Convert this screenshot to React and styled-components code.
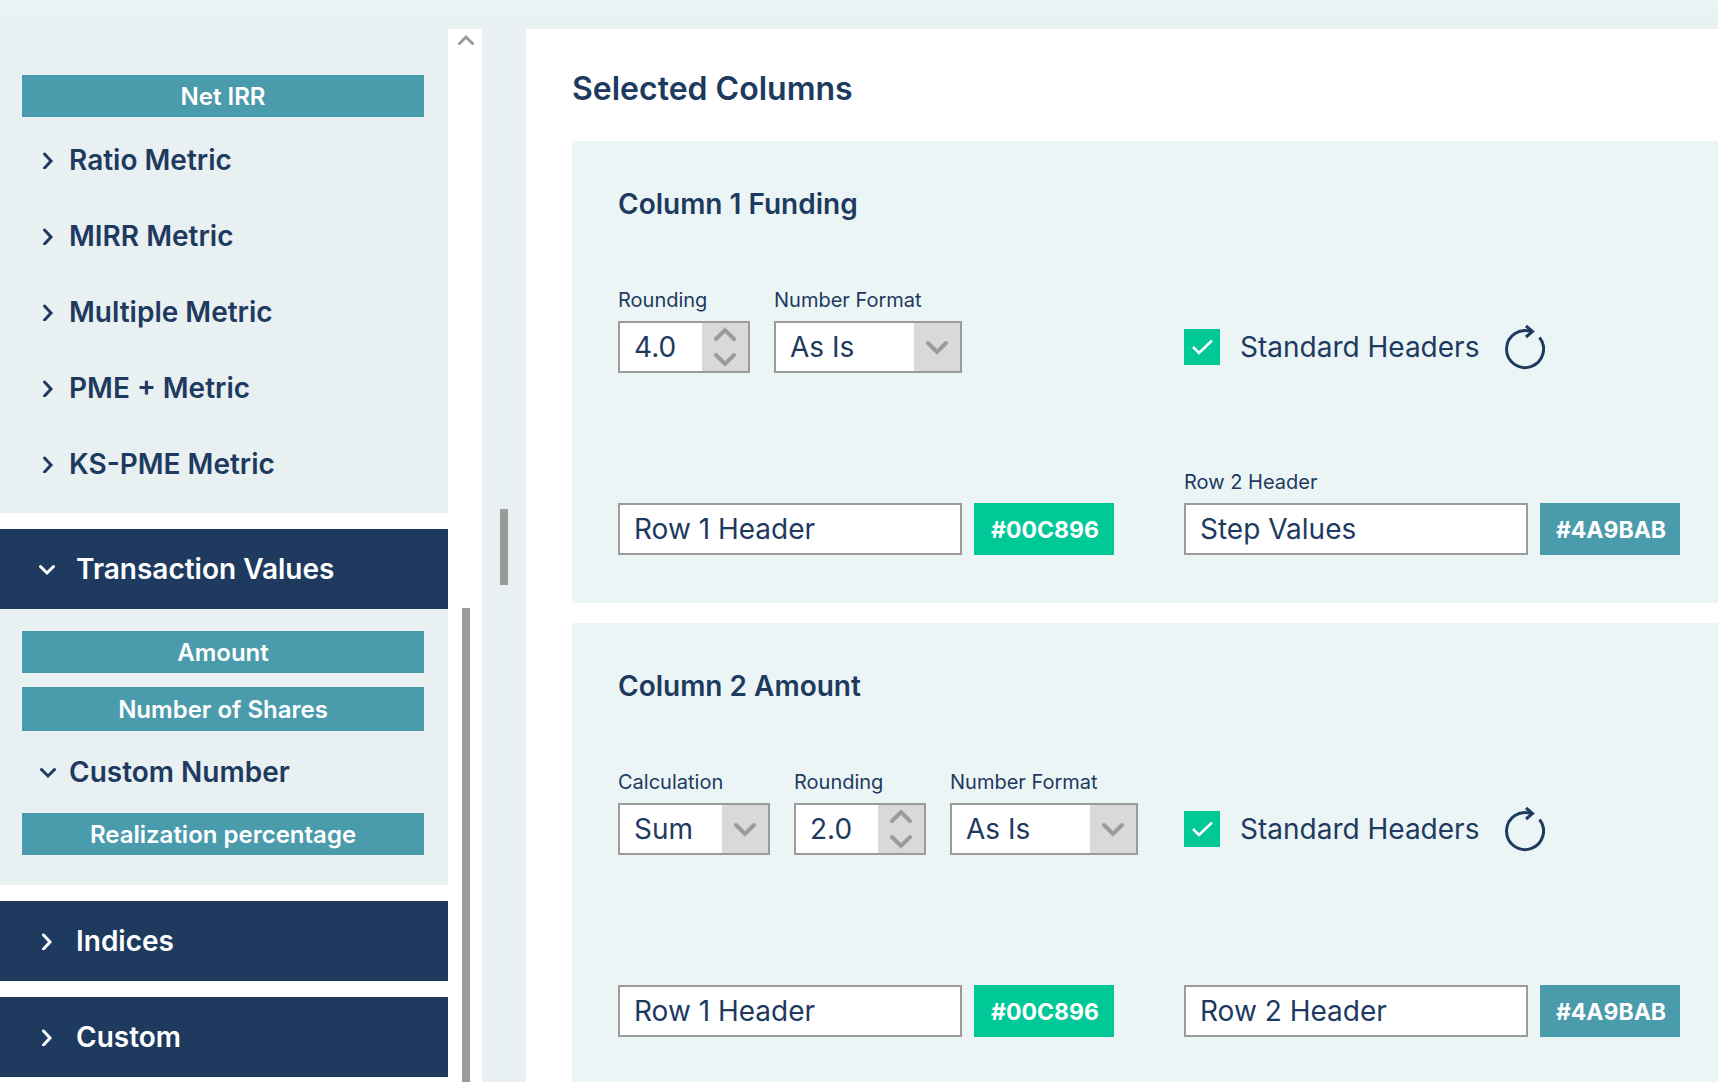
import React, { useState } from "react";
import styled, { createGlobalStyle } from "styled-components";

const GlobalStyle = createGlobalStyle`
  * {
    box-sizing: border-box;
  }
  body {
    margin: 0;
    font-family: Inter, "Liberation Sans", sans-serif;
    color: #1e3a5f;
  }
  button,
  input,
  select {
    margin: 0;
    border: 0;
    border-radius: 0;
    padding: 0;
    font-family: inherit;
    color: inherit;
  }
  button {
    cursor: pointer;
  }
`;

const Page = styled.div`
  display: flex;
  height: 100vh;
  padding-top: 29px;
  overflow: hidden;
  background: linear-gradient(#ebf3f5, #e8f0f2 29px);
`;

const Sidebar = styled.aside`
  flex: none;
  display: flex;
  width: 482px;
  background-color: #ffffff;
`;

const Sections = styled.nav`
  flex: 1;
  display: flex;
  flex-direction: column;
  gap: 16px;
  overflow: hidden;
`;

const Section = styled.section`
  flex: none;
`;

const SectionHeader = styled.button`
  display: flex;
  align-items: center;
  gap: 21px;
  width: 100%;
  height: 80px;
  padding-left: 39px;
  background-color: #1e3a5f;
  color: #ffffff;
  font-size: 28px;
  font-weight: 600;
`;

const SectionBody = styled.div`
  display: flex;
  flex-direction: column;
  gap: ${(props) => props.$gap}px;
  padding: ${(props) => props.$padding};
  background-color: #e8f0f2;
`;

const Metric = styled.button`
  height: ${(props) => (props.$tall ? 44 : 42)}px;
  background-color: #4a9bab;
  color: #ffffff;
  font-size: 24px;
  font-weight: 600;
`;

const GroupList = styled.div`
  display: flex;
  flex-direction: column;
`;

const Group = styled.button`
  display: flex;
  align-items: center;
  gap: 13px;
  height: ${(props) => (props.$open ? 54 : 76)}px;
  padding-left: 18px;
  background: none;
  font-size: 28px;
  font-weight: 600;
`;

const Scrollbar = styled.div`
  flex: none;
  display: flex;
  flex-direction: column;
  align-items: center;
  justify-content: space-between;
  width: 34px;
  padding-left: 2px;
`;

const ScrollUp = styled.button`
  display: flex;
  align-items: center;
  justify-content: center;
  width: 100%;
  height: 22px;
  background: none;
  color: #9b9b99;
`;

const ScrollThumb = styled.div`
  width: 8px;
  height: 45%;
  background-color: #9b9b99;
`;

const Splitter = styled.div`
  flex: none;
  display: flex;
  justify-content: center;
  align-items: center;
  width: 44px;
  padding-bottom: 18px;
  &::before {
    width: 8px;
    height: 76px;
    background-color: #9b9b99;
    content: "";
  }
`;

const Main = styled.main`
  flex: 1;
  min-width: 0;
  padding: 40px 0 0 46px;
  overflow: hidden;
  background-color: #ffffff;
`;

const Title = styled.h1`
  margin: 0 0 32px;
  font-size: 32px;
  line-height: 40px;
  font-weight: 600;
`;

const Card = styled.section`
  margin-bottom: 20px;
  padding: 47px 38px 48px 46px;
  background-color: #ecf5f6;
`;

const CardTitle = styled.h2`
  margin: 0 0 68px;
  font-size: 28px;
  line-height: 32px;
  font-weight: 600;
`;

const CardGrid = styled.div`
  display: grid;
  grid-template-columns: 520px auto;
  align-items: end;
  gap: 97px 46px;
`;

const Fields = styled.div`
  display: flex;
  align-items: flex-end;
  gap: ${(props) => props.$gap}px;
`;

const Field = styled.div`
  display: flex;
  flex-direction: column;
  gap: 9px;
`;

const Label = styled.label`
  height: 24px;
  font-size: 20px;
  line-height: 24px;
  white-space: nowrap;
`;

const Control = styled.div`
  position: relative;
  display: flex;
  width: ${(props) => props.$width}px;
  height: 52px;
  border: 2px solid #9b9b99;
  background-color: #ffffff;
`;

const TextInput = styled.input`
  flex: 1;
  min-width: 0;
  padding-left: 14px;
  background: none;
  font-size: 28px;
  &::placeholder {
    color: inherit;
    opacity: 1;
  }
`;

const Select = styled.select`
  flex: 1;
  padding-left: 14px;
  appearance: none;
  background: linear-gradient(#d9d9d9, #d9d9d9) right / 46px 100% no-repeat;
  font-size: 28px;
`;

const SelectArrow = styled.span`
  position: absolute;
  top: 0;
  right: 0;
  bottom: 0;
  display: flex;
  align-items: center;
  justify-content: center;
  width: 46px;
  color: #9b9b99;
  pointer-events: none;
`;

const Stepper = styled.div`
  display: flex;
  flex-direction: column;
  width: 46px;
  background-color: #d9d9d9;
`;

const StepButton = styled.button`
  flex: 1;
  display: flex;
  align-items: center;
  justify-content: center;
  background: none;
  color: #9b9b99;
`;

const ColorButton = styled.button`
  width: 140px;
  height: 52px;
  padding: 2px 0 0 2px;
  background-color: ${(props) => props.$color};
  color: #ffffff;
  font-size: 23px;
  font-weight: 700;
`;

const HeadersRow = styled.div`
  display: flex;
  align-items: center;
  gap: 26px;
  height: 52px;
`;

const CheckLabel = styled.label`
  display: flex;
  align-items: center;
  gap: 20px;
  font-size: 28px;
  white-space: nowrap;
`;

const CheckBox = styled.span`
  position: relative;
  display: flex;
  & input {
    width: 36px;
    height: 36px;
    appearance: none;
    background-color: #ffffff;
  }
  & input:checked {
    background-color: #00c896;
  }
  & svg {
    position: absolute;
    inset: 0;
    pointer-events: none;
  }
`;

const ResetButton = styled.button`
  display: flex;
  background: none;
`;

const Caret = ({ open }) => (
  <svg width="16" height="18" fill="none" stroke="currentColor" strokeWidth="3">
    <path
      d={open ? "M1.5 6.5 8 13 14.5 6.5" : "M4.5 3 11 10 4.5 17"}
      strokeLinecap="round"
    />
  </svg>
);

const Arrow = ({ up }) => (
  <svg width="24" height="16" fill="none" stroke="currentColor" strokeWidth="4">
    <path
      d={up ? "M3 12 12 3 21 12" : "M3 4 12 13 21 4"}
      strokeLinecap="round"
    />
  </svg>
);

const MetricGroup = ({ name, open }) => (
  <Group type="button" aria-expanded={!!open} $open={open}>
    <Caret open={open} />
    {name}
  </Group>
);

const Header = ({ name, open }) => (
  <SectionHeader type="button" aria-expanded={!!open}>
    <Caret open={open} />
    {name}
  </SectionHeader>
);

const SelectField = ({ id, label, width, options }) => (
  <Field>
    <Label htmlFor={id}>{label}</Label>
    <Control $width={width}>
      <Select id={id}>
        {options.map((option) => (
          <option key={option}>{option}</option>
        ))}
      </Select>
      <SelectArrow>
        <Arrow />
      </SelectArrow>
    </Control>
  </Field>
);

const RoundingField = ({ id, initial }) => {
  const [value, setValue] = useState(initial);
  const step = (by) => setValue((Number(value) + by).toFixed(1));

  return (
    <Field>
      <Label htmlFor={id}>Rounding</Label>
      <Control $width={132}>
        <TextInput
          id={id}
          inputMode="decimal"
          value={value}
          onChange={(e) => setValue(e.target.value)}
        />
        <Stepper>
          <StepButton type="button" aria-label="Increase" onClick={() => step(1)}>
            <Arrow up />
          </StepButton>
          <StepButton type="button" aria-label="Decrease" onClick={() => step(-1)}>
            <Arrow />
          </StepButton>
        </Stepper>
      </Control>
    </Field>
  );
};

const HeaderField = ({ id, name, initial = "", color }) => {
  const [value, setValue] = useState(initial);

  return (
    <Fields $gap={12}>
      <Field>
        {/* the label floats above the box only once something is typed */}
        <Label htmlFor={id}>{value && name}</Label>
        <Control $width={344}>
          <TextInput
            id={id}
            aria-label={name}
            placeholder={name}
            value={value}
            onChange={(e) => setValue(e.target.value)}
          />
        </Control>
      </Field>
      <ColorButton type="button" $color={color}>
        {color}
      </ColorButton>
    </Fields>
  );
};

const StandardHeaders = () => {
  const [checked, setChecked] = useState(true);

  return (
    <HeadersRow>
      <CheckLabel>
        <CheckBox>
          <input
            type="checkbox"
            checked={checked}
            onChange={(e) => setChecked(e.target.checked)}
          />
          <svg width="36" height="36" fill="none" stroke="#ffffff" strokeWidth="2.5">
            <path d="M9 18 15 24 28 11.5" />
          </svg>
        </CheckBox>
        Standard Headers
      </CheckLabel>
      <ResetButton type="button" aria-label="Reset headers">
        <svg width="40" height="46" fill="none" stroke="#1e3a5f" strokeWidth="3">
          <path d="M34.5 13.5A18.5 18.5 0 1 1 27 7.9" />
          <path d="M21 2 27.5 7.5 21 13" />
        </svg>
      </ResetButton>
    </HeadersRow>
  );
};

const columns = [
  { title: "Column 1 Funding", rounding: "4.0", row2: "Step Values" },
  { title: "Column 2 Amount", rounding: "2.0", calculation: true },
];

const ColumnCard = ({ column, id }) => (
  <Card>
    <CardTitle>{column.title}</CardTitle>
    <CardGrid>
      <Fields $gap={24}>
        {column.calculation && (
          <SelectField
            id={`${id}-calculation`}
            label="Calculation"
            width={152}
            options={["Sum"]}
          />
        )}
        <RoundingField id={`${id}-rounding`} initial={column.rounding} />
        <SelectField
          id={`${id}-format`}
          label="Number Format"
          width={188}
          options={["As Is"]}
        />
      </Fields>
      <StandardHeaders />
      <HeaderField id={`${id}-row1`} name="Row 1 Header" color="#00C896" />
      <HeaderField
        id={`${id}-row2`}
        name="Row 2 Header"
        initial={column.row2}
        color="#4A9BAB"
      />
    </CardGrid>
  </Card>
);

const App = () => (
  <>
    <GlobalStyle />
    <Page>
      <Sidebar>
        <Sections>
          <Section>
            <SectionBody $gap={5} $padding="46px 24px 11px 22px">
              <Metric type="button">Net IRR</Metric>
              <GroupList>
                <MetricGroup name="Ratio Metric" />
                <MetricGroup name="MIRR Metric" />
                <MetricGroup name="Multiple Metric" />
                <MetricGroup name="PME + Metric" />
                <MetricGroup name="KS-PME Metric" />
              </GroupList>
            </SectionBody>
          </Section>
          <Section>
            <Header name="Transaction Values" open />
            <SectionBody $gap={14} $padding="22px 24px 30px 22px">
              <Metric type="button">Amount</Metric>
              <Metric type="button" $tall>
                Number of Shares
              </Metric>
              <MetricGroup name="Custom Number" open />
              <Metric type="button">Realization percentage</Metric>
            </SectionBody>
          </Section>
          <Section>
            <Header name="Indices" />
          </Section>
          <Section>
            <Header name="Custom" />
          </Section>
        </Sections>
        <Scrollbar>
          <ScrollUp type="button" aria-label="Scroll up">
            <svg width="16" height="12" fill="none" stroke="currentColor" strokeWidth="3">
              <path d="M1.5 9.5 8 3 14.5 9.5" strokeLinecap="round" />
            </svg>
          </ScrollUp>
          <ScrollThumb />
        </Scrollbar>
      </Sidebar>
      <Splitter />
      <Main>
        <Title>Selected Columns</Title>
        {columns.map((column, i) => (
          <ColumnCard key={i} id={`column-${i + 1}`} column={column} />
        ))}
      </Main>
    </Page>
  </>
);

export default App;
